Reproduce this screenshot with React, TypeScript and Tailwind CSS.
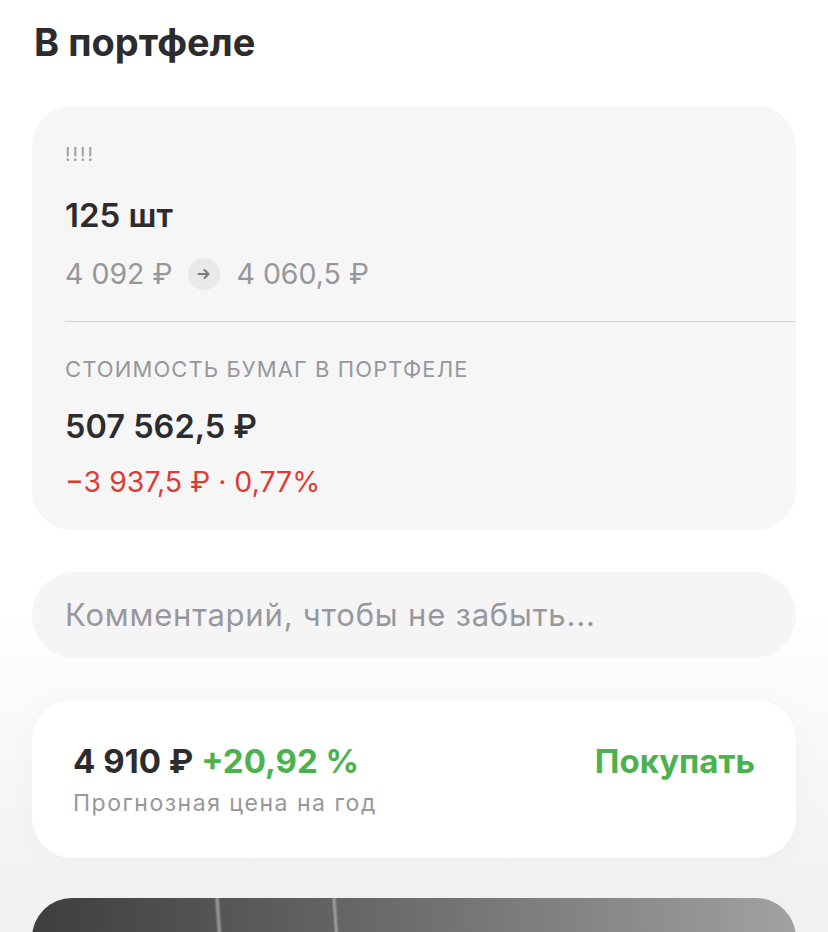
import React from 'react'

const font = { fontFamily: 'Inter, "Noto Sans", sans-serif' }

const Arrow = () => (
   <span className="mx-[16px] flex h-[32px] w-[32px] items-center justify-center rounded-full bg-[#e9e9eb]">
      <svg width="16" height="16" viewBox="0 0 16 16" fill="none">
         <path d="M2.5 8h10M8.5 4l4 4-4 4" stroke="#7b7b80" strokeWidth="2.2" strokeLinecap="round" strokeLinejoin="round" />
      </svg>
   </span>
)

const PortfolioCard = () => (
   <div className="rounded-[40px] bg-[#f6f6f7] pb-[30px] pt-[37px]">
      <div className="px-[33px]">
         <p className="text-[19px] leading-[24px] tracking-[2px] text-[#9a9a9e]">!!!!</p>
         <p className="mt-[28px] text-[33px] font-semibold leading-[40px] text-[#2c2c2e]">125 шт</p>
         <div className="mt-[19px] flex items-center text-[28.5px] leading-[40px] text-[#97979b]">
            <span>4 092 ₽</span>
            <Arrow />
            <span>4 060,5 ₽</span>
         </div>
      </div>
      <div className="ml-[33px] mt-[27px] h-px bg-[#d4d4d6]" />
      <div className="px-[33px]">
         <p className="mt-[33px] text-[22px] uppercase leading-[28px] tracking-[1.1px] text-[#97979b]">
            Стоимость бумаг в портфеле
         </p>
         <p className="mt-[24px] text-[32.5px] font-semibold leading-[40px] text-[#2c2c2e]">507 562,5 ₽</p>
         <p className="mt-[17px] text-[28.5px] leading-[36px] text-[#de3b33]">−3 937,5 ₽ · 0,77%</p>
      </div>
   </div>
)

const Forecast = () => (
   <div className="flex items-start justify-between rounded-[40px] bg-white px-[41px] pb-[40px] pt-[41px]">
      <div>
         <p className="text-[33px] font-bold leading-[40px]">
            <span className="text-[#2c2c2e]">4 910 ₽</span>{' '}
            <span className="text-[#4cb14f]">+20,92 %</span>
         </p>
         <p className="mt-[7px] text-[23px] leading-[30px] tracking-[1.5px] text-[#97979b]">Прогнозная цена на год</p>
      </div>
      <p className="text-[33px] font-bold leading-[40px] text-[#4cb14f]">Покупать</p>
   </div>
)

const Photo = () => (
   <div className="relative h-[120px] overflow-hidden rounded-t-[40px] bg-gradient-to-r from-[#3e3e3e] via-[#6e6e6e] to-[#a2a2a2]">
      <div className="absolute left-[186px] top-0 h-full w-[6px] rotate-[-4deg] bg-gradient-to-r from-[#555] via-[#999] to-[#666]" />
      <div className="absolute left-[303px] top-0 h-full w-[6px] rotate-[-4deg] bg-gradient-to-r from-[#5a5a5a] via-[#a0a0a0] to-[#6a6a6a]" />
   </div>
)

export default function App() {
   return (
      <div style={font} className="h-[932px] w-[828px] overflow-hidden bg-white">
         <div className="bg-gradient-to-b from-white from-[68%] to-[#f1f1f2] px-[32px] pb-[40px] pt-[20px]">
            <h1 className="pl-[2px] text-[38px] font-bold leading-[44px] text-[#2c2c2e]">В портфеле</h1>
            <div className="mt-[42px]">
               <PortfolioCard />
            </div>
            <div className="mt-[42px] flex h-[86px] items-center rounded-full bg-[#f5f5f6] px-[33px]">
               <span className="text-[31px] tracking-[0.8px] text-[#98989c]">Комментарий, чтобы не забыть...</span>
            </div>
            <div className="mt-[42px] rounded-[40px] shadow-[0_0_30px_rgba(0,0,0,0.03)]">
               <Forecast />
            </div>
         </div>
         <div className="bg-[#f1f1f2] px-[32px]">
            <Photo />
         </div>
      </div>
   )
}
